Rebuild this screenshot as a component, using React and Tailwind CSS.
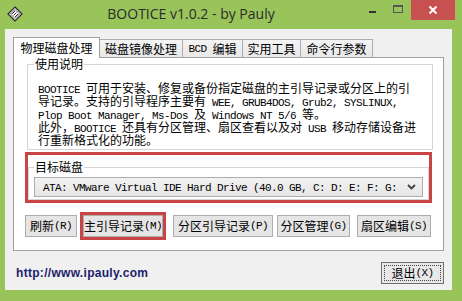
import React from 'react';

const cjk = "font-['Noto_Sans_CJK_SC',sans-serif]";

// SimSun-like mix: CJK at 12px, ASCII runs as a 6px-wide mono
function T({ children }) {
  const parts = children.split(/([\x20-\x7e]+)/).filter(Boolean);
  return parts.map((p, i) =>
    /^[\x20-\x7e]+$/.test(p) ? (
      <span key={i} className="font-['Liberation_Mono',monospace] text-[11px] tracking-[-0.6px] whitespace-pre">
        {p}
      </span>
    ) : (
      <span key={i}>{p}</span>
    )
  );
}

function AppIcon() {
  return (
    <svg width="16" height="16" viewBox="0 0 16 16">
      <polygon points="8,1 15,8 8,15 1,8" fill="#e8e8e8" stroke="#2a2a2a" strokeWidth="1.2" />
      <polygon points="8,3.5 12.5,8 8,12.5 3.5,8" fill="#ffffff" stroke="#555" strokeWidth="0.8" />
      <line x1="5" y1="8" x2="8" y2="5" stroke="#333" strokeWidth="1" />
      <line x1="6.5" y1="9.5" x2="9.5" y2="6.5" stroke="#333" strokeWidth="1" />
      <line x1="8" y1="11" x2="11" y2="8" stroke="#333" strokeWidth="1" />
    </svg>
  );
}

function Tab({ label, active, w }) {
  if (active) {
    return (
      <div
        className={`relative z-10 h-[21px] -mb-px bg-white border border-b-0 border-[#a0a0a0] flex items-center justify-center whitespace-nowrap text-[12px] leading-[14px] text-black ${w}`}
      >
        <T>{label}</T>
      </div>
    );
  }
  return (
    <div
      className={`h-[18px] -ml-px bg-gradient-to-b from-[#f4f4f4] to-[#e8e8e8] border border-b-0 border-[#acacac] flex items-center justify-center whitespace-nowrap text-[12px] leading-[14px] text-black ${w}`}
    >
      <T>{label}</T>
    </div>
  );
}

function Btn({ label, w, className = '' }) {
  return (
    <div
      className={`h-[22px] bg-[#e5e5e5] border border-[#adadad] flex items-center justify-center whitespace-nowrap text-[12px] leading-[14px] text-black ${w} ${className}`}
    >
      <T>{label}</T>
    </div>
  );
}

const lines = [
  'BOOTICE 可用于安装、修复或备份指定磁盘的主引导记录或分区上的引',
  '导记录。支持的引导程序主要有 WEE, GRUB4DOS, Grub2, SYSLINUX,',
  'Plop Boot Manager, Ms-Dos 及 Windows NT 5/6 等。',
  '此外，BOOTICE 还具有分区管理、扇区查看以及对 USB 移动存储设备进',
  '行重新格式化的功能。',
];

export default function App() {
  return (
    <div className={`w-[462px] h-[301px] bg-[#99c45a] flex flex-col overflow-hidden ${cjk}`}>
      {/* title bar */}
      <div className="h-[29px] flex items-start">
        <div className="pl-[7px] pt-[6px]">
          <AppIcon />
        </div>
        <div className="flex-1 text-center pt-[4px] font-['Open_Sans',sans-serif] text-[14px] text-[#2b2b2b] leading-[20px]">
          BOOTICE v1.0.2 - by Pauly
        </div>
        <div className="flex items-start">
          <div className="w-[26px] h-[20px] flex items-center justify-center">
            <div className="w-[7px] h-[2px] bg-[#333] mt-[4px]" />
          </div>
          <div className="w-[26px] h-[20px] flex items-start justify-center pt-[5px]">
            <div className="w-[10px] h-[8px] border border-[#555] border-t-2" />
          </div>
          <div className="w-[44px] h-[20px] bg-[#c75050] flex items-center justify-center mr-[7px]">
            <svg width="10" height="10" viewBox="0 0 10 10">
              <path d="M1.5 1.5 L8.5 8.5 M8.5 1.5 L1.5 8.5" stroke="#fff" strokeWidth="2" />
            </svg>
          </div>
        </div>
      </div>

      {/* client area */}
      <div className="ml-[5px] w-[447px] h-[261px] bg-[#f0f0f0] flex flex-col px-[8px] pt-[8px]">
        {/* tabs */}
        <div className="h-[20px] flex items-end">
          <Tab label="物理磁盘处理" active w="w-[87px]" />
          <Tab label="磁盘镜像处理" w="w-[84px]" />
          <Tab label="BCD 编辑" w="w-[61px]" />
          <Tab label="实用工具" w="w-[59px]" />
          <Tab label="命令行参数" w="w-[73px]" />
        </div>

        {/* panel */}
        <div className="h-[194px] bg-white border border-[#a0a0a0] flex flex-col text-[12px] text-black">
          <fieldset className="ml-[13px] w-[406px] h-[92px] border border-[#d5d5d5] pl-[6px]">
            <legend className="px-[1px] leading-[12px]">使用说明</legend>
            <div className="pt-[11px] pl-[4px]">
              {lines.map((l, i) => (
                <div key={i} className="whitespace-nowrap h-[13px] leading-[13px]">
                  <T>{l}</T>
                </div>
              ))}
            </div>
          </fieldset>

          <div className="ml-[11px] mt-[2px] w-[407px] h-[51px] border-[3px] border-[#c94545]">
            <fieldset className="mt-[6px] h-[39px] border border-[#d5d5d5] pl-[5px] pr-[4px]">
              <legend className="px-[1px] leading-[12px]">目标磁盘</legend>
              <div className="mt-[4px] w-[389px] h-[20px] border border-[#acacac] bg-gradient-to-b from-[#f2f2f2] to-[#e6e6e6] flex items-center pl-[8px] pr-[6px]">
                <div className="flex-1 whitespace-nowrap leading-[18px]">
                  <T>ATA: VMware Virtual IDE Hard Drive (40.0 GB, C: D: E: F: G:</T>
                </div>
                <svg width="9" height="6" viewBox="0 0 9 6">
                  <path d="M1 1 L4.5 4.5 L8 1" stroke="#404040" strokeWidth="1.8" fill="none" />
                </svg>
              </div>
            </fieldset>
          </div>

          <div className="flex mt-[12px] ml-[11px]">
            <Btn label="刷新(R)" w="w-[52px]" />
            <Btn
              label="主引导记录(M)"
              w="w-[80px]"
              className="ml-[6px] outline-[3px] outline-solid outline-[#c94545] outline-offset-0"
            />
            <Btn label="分区引导记录(P)" w="w-[100px]" className="ml-[10px]" />
            <Btn label="分区管理(G)" w="w-[73px]" className="ml-[4px]" />
            <Btn label="扇区编辑(S)" w="w-[74px]" className="ml-[7px]" />
          </div>
        </div>

        {/* bottom row */}
        <div className="flex items-start justify-between pt-[11px]">
          <div className="ml-[3px] mt-[4px] font-['Liberation_Sans',sans-serif] font-bold text-[12px] tracking-[0.3px] text-[#1d1d6b] leading-[14px]">
            http://www.ipauly.com
          </div>
          <div className="w-[63px] h-[22px] bg-[#e8e8e8] border border-[#707070] p-[2px]">
            <div className="h-full border border-dotted border-[#444] flex items-center justify-center whitespace-nowrap text-[12px] leading-[14px] text-black">
              <T>退出(X)</T>
            </div>
          </div>
        </div>
      </div>
    </div>
  );
}
